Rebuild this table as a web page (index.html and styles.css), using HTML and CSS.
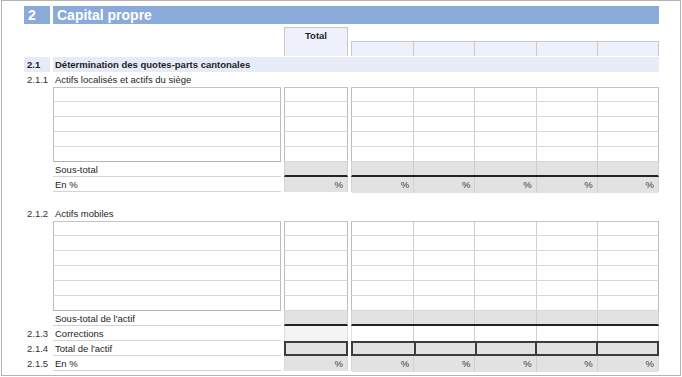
FILE: index.html
```html
<!DOCTYPE html>
<html>
<head>
  <meta charset="UTF-8">
  <title>Capital propre</title>
  <link rel="stylesheet" href="styles.css">
</head>
<body>
  <div class="page">
    <div class="title-row">
      <div class="title-num">2</div>
      <div class="title-text">Capital propre</div>
    </div>

    <div class="row colhead">
      <div></div>
      <div></div>
      <div class="tot">Total</div>
      <div class="vals"><div></div><div></div><div></div><div></div><div></div></div>
    </div>

    <div class="row section">
      <div class="num">2.1</div>
      <div class="section-title">Détermination des quotes-parts cantonales</div>
    </div>

    <!-- 2.1.1 -->
    <div class="row">
      <div class="num">2.1.1</div>
      <div class="lbl">Actifs localisés et actifs du siège</div>
    </div>
    <div class="block">
      <div class="row">
        <div></div><div class="lbl"></div><div class="tot"></div>
        <div class="vals"><div></div><div></div><div></div><div></div><div></div></div>
      </div>
      <div class="row">
        <div></div><div class="lbl"></div><div class="tot"></div>
        <div class="vals"><div></div><div></div><div></div><div></div><div></div></div>
      </div>
      <div class="row">
        <div></div><div class="lbl"></div><div class="tot"></div>
        <div class="vals"><div></div><div></div><div></div><div></div><div></div></div>
      </div>
      <div class="row">
        <div></div><div class="lbl"></div><div class="tot"></div>
        <div class="vals"><div></div><div></div><div></div><div></div><div></div></div>
      </div>
      <div class="row">
        <div></div><div class="lbl"></div><div class="tot"></div>
        <div class="vals"><div></div><div></div><div></div><div></div><div></div></div>
      </div>
    </div>
    <div class="row sum">
      <div></div>
      <div class="lbl">Sous-total</div>
      <div class="tot"></div>
      <div class="vals"><div></div><div></div><div></div><div></div><div></div></div>
    </div>
    <div class="row pct">
      <div></div>
      <div class="lbl">En %</div>
      <div class="tot">%</div>
      <div class="vals"><div>%</div><div>%</div><div>%</div><div>%</div><div>%</div></div>
    </div>

    <!-- 2.1.2 -->
    <div class="row gap-before">
      <div class="num">2.1.2</div>
      <div class="lbl">Actifs mobiles</div>
    </div>
    <div class="block">
      <div class="row">
        <div></div><div class="lbl"></div><div class="tot"></div>
        <div class="vals"><div></div><div></div><div></div><div></div><div></div></div>
      </div>
      <div class="row">
        <div></div><div class="lbl"></div><div class="tot"></div>
        <div class="vals"><div></div><div></div><div></div><div></div><div></div></div>
      </div>
      <div class="row">
        <div></div><div class="lbl"></div><div class="tot"></div>
        <div class="vals"><div></div><div></div><div></div><div></div><div></div></div>
      </div>
      <div class="row">
        <div></div><div class="lbl"></div><div class="tot"></div>
        <div class="vals"><div></div><div></div><div></div><div></div><div></div></div>
      </div>
      <div class="row">
        <div></div><div class="lbl"></div><div class="tot"></div>
        <div class="vals"><div></div><div></div><div></div><div></div><div></div></div>
      </div>
      <div class="row">
        <div></div><div class="lbl"></div><div class="tot"></div>
        <div class="vals"><div></div><div></div><div></div><div></div><div></div></div>
      </div>
    </div>
    <div class="row sum">
      <div></div>
      <div class="lbl">Sous-total de l'actif</div>
      <div class="tot"></div>
      <div class="vals"><div></div><div></div><div></div><div></div><div></div></div>
    </div>
    <div class="row corr">
      <div class="num">2.1.3</div>
      <div class="lbl">Corrections</div>
      <div class="tot"></div>
      <div class="vals"><div></div><div></div><div></div><div></div><div></div></div>
    </div>
    <div class="row grand">
      <div class="num">2.1.4</div>
      <div class="lbl">Total de l'actif</div>
      <div class="tot"></div>
      <div class="vals"><div></div><div></div><div></div><div></div><div></div></div>
    </div>
    <div class="row pct last">
      <div class="num">2.1.5</div>
      <div class="lbl">En %</div>
      <div class="tot">%</div>
      <div class="vals"><div>%</div><div>%</div><div>%</div><div>%</div><div>%</div></div>
    </div>
  </div>
</body>
</html>
```

FILE: styles.css
```css
body {
  margin: 0;
  font-family: "Liberation Sans", Arial, sans-serif;
  font-size: 9.5px;
  color: #1e1e1e;
  background-color: #fff;
}
.page {
  margin-left: 1px;
  width: 680px;
  height: 376px;
  box-sizing: border-box;
  border: 1px solid #b4b4b4;
  padding: 5px 0 0 22px;
}

/* Titre de chapitre */
.title-row {
  display: grid;
  grid-template-columns: 26px 606px;
  column-gap: 3px;
  height: 18px;
  color: white;
  font-weight: bold;
  font-size: 14px;
  line-height: 18px;
}
.title-num, .title-text {
  background-color: #8aaad9;
  padding-left: 4px;
}

/* Grille commune : numéro, libellé, total, 5 colonnes */
.row {
  display: grid;
  grid-template-columns: 26px 228px 64px 308px;
  grid-template-rows: 15px;
  column-gap: 3px;
  height: 15px;
  line-height: 16px;
}
.row > div {
  box-sizing: border-box;
}
.vals {
  display: grid;
  grid-template-columns: repeat(5, 1fr);
}
.vals > div {
  box-sizing: border-box;
}
.num {
  padding-left: 3px;
  color: #333;
}
.lbl {
  padding-left: 2px;
}

/* En-tête des colonnes */
.colhead {
  grid-template-rows: 29px;
  height: 29px;
  margin-top: 3px;
  line-height: 14px;
}
.colhead .tot {
  background-color: #eef1fb;
  border: 1px solid #c9c9c9;
  border-bottom: none;
  text-align: center;
  font-weight: bold;
  padding-top: 1px;
}
.colhead .vals {
  align-self: end;
  height: 15px;
  border: 1px solid #c9c9c9;
  border-bottom: none;
  background-color: #eef1fb;
}
.colhead .vals > div + div {
  border-left: 1px solid #c9c9c9;
}

/* Sous-titre 2.1 */
.section {
  margin-top: 1px;
  font-weight: bold;
  line-height: 15px;
}
.section .num {
  background-color: #e7ebf7;
  color: #1e1e1e;
}
.section-title {
  grid-column: 2 / 5;
  background-color: #e7ebf7;
  padding-left: 2px;
}

.gap-before {
  margin-top: 14px;
}

/* Lignes de saisie */
.block .lbl, .block .tot, .block .vals {
  border-left: 1px solid #bdbdbd;
  border-right: 1px solid #bdbdbd;
  border-bottom: 1px solid #d8d8d8;
}
.block .row:first-child .lbl,
.block .row:first-child .tot,
.block .row:first-child .vals {
  border-top: 1px solid #c4c4c4;
}
.block .row:last-child .lbl {
  border-bottom-color: #b4b4b4;
}
.block .vals > div + div,
.sum .vals > div + div,
.pct .vals > div + div,
.corr .vals > div + div {
  border-left: 1px solid #cfcfcf;
}

/* Sous-totaux */
.sum .lbl, .pct .lbl, .corr .lbl, .grand .lbl {
  border-bottom: 1px solid #d4d4d4;
}
.sum .tot, .sum .vals {
  background-color: #e2e2e2;
  border-left: 1px solid #d0d0d0;
  border-right: 1px solid #d0d0d0;
  border-bottom: 2px solid #222;
}
.pct .tot, .pct .vals > div {
  background-color: #e2e2e2;
  text-align: right;
  padding-right: 4px;
  color: #3c3c3c;
}
.pct .tot, .pct .vals {
  border-left: 1px solid #d6d6d6;
  border-right: 1px solid #d6d6d6;
}

/* Corrections */
.corr .tot {
  background-color: #f4f4f4;
  border-left: 1px solid #e0e0e0;
  border-right: 1px solid #e0e0e0;
}
.corr .vals {
  border-left: 1px solid #e0e0e0;
  border-right: 1px solid #e0e0e0;
}

/* Total de l'actif */
.grand .tot, .grand .vals {
  background-color: #e2e2e2;
  border: 2px solid #3c3c3c;
}
.grand .vals > div + div {
  border-left: 2px solid #3c3c3c;
}
```
